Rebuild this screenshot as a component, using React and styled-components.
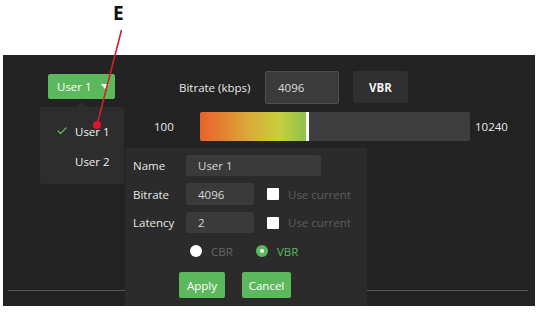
import React from "react";
import styled, { createGlobalStyle } from "styled-components";
import { Check } from "lucide-react";

const GREEN = "#5cb85c";

const GlobalStyle = createGlobalStyle`
  html, body {
    margin: 0;
    padding: 0;
    background: #ffffff;
  }
  body {
    font-family: "Open Sans", "Noto Sans", sans-serif;
  }
`;

const Stage = styled.div`
  position: relative;
  width: 540px;
  height: 312px;
  overflow: hidden;
  background: #fff;
`;

const Callout = styled.div`
  position: absolute;
  left: 113px;
  top: 0;
  line-height: 26px;
  font-family: "Open Sans", "Liberation Sans", sans-serif;
  font-weight: 700;
  font-size: 19px;
  color: #111;
`;

const Pointer = styled.svg`
  position: absolute;
  left: 0;
  top: 0;
  width: 540px;
  height: 312px;
  pointer-events: none;
  z-index: 5;
`;

const Panel = styled.div`
  position: relative;
  margin: 55px 0 0 3px;
  width: 532px;
  height: 251px;
  background: #232323;
  display: flex;
  flex-direction: column;
  color: #e8e8e8;
  font-size: 11.5px;
`;

const TopRow = styled.div`
  display: flex;
  align-items: center;
  height: 34px;
  margin-top: 15px;
  padding-left: 45px;
`;

const ProfileButton = styled.button`
  display: flex;
  align-items: center;
  gap: 9px;
  width: 67px;
  height: 25px;
  padding: 0 0 0 9px;
  border: none;
  border-radius: 2px;
  background: ${GREEN};
  color: #fff;
  font: inherit;
  margin-top: -2px;
`;

const Caret = styled.span`
  width: 0;
  height: 0;
  border-left: 4px solid transparent;
  border-right: 4px solid transparent;
  border-top: 5px solid #fff;
`;

const FieldLabel = styled.span`
  margin-left: 64px;
  width: 86px;
`;

const BitrateInput = styled.div`
  box-sizing: border-box;
  width: 74px;
  height: 33px;
  display: flex;
  align-items: center;
  padding-left: 12px;
  background: #3b3b3b;
  border: 1px solid #4d4d4d;
  border-radius: 2px;
  color: #ddd;
`;

const ModeButton = styled.div`
  margin-left: 14px;
  width: 55px;
  height: 32px;
  display: flex;
  align-items: center;
  justify-content: center;
  background: #2f2f2f;
  border-radius: 3px;
  font-weight: 700;
  color: #f2f2f2;
`;

const SliderRow = styled.div`
  display: flex;
  align-items: center;
  margin-top: 8px;
  padding-left: 151px;
  height: 29px;
`;

const RangeValue = styled.span`
  width: ${(p) => p.$w}px;
  margin-left: ${(p) => p.$ml || 0}px;
`;

const Track = styled.div`
  width: 270px;
  height: 29px;
  background: #3e3e3e;
  border-radius: 2px;
  overflow: hidden;
  display: flex;
`;

const Fill = styled.div`
  height: 100%;
  background: linear-gradient(90deg, #e8612b 0%, #dba83a 45%, #c8cf3c 75%, #8cc34b 100%);
  border-right: 3px solid #ffffff;
`;

const Divider = styled.div`
  margin: auto 7px 15px 5px;
  height: 1px;
  background: #575757;
`;

const Menu = styled.div`
  position: absolute;
  left: 37px;
  top: 52px;
  width: 84px;
  height: 77px;
  background: #2d2d2d;
  border-radius: 2px;
  padding-top: 9px;
  box-sizing: border-box;
  z-index: 2;
  &::before {
    content: "";
    position: absolute;
    left: 36px;
    top: -5px;
    border-left: 5px solid transparent;
    border-right: 5px solid transparent;
    border-bottom: 5px solid #2d2d2d;
  }
`;

const MenuItem = styled.div`
  display: flex;
  align-items: center;
  height: 30px;
  padding-left: 16px;
  gap: 6px;
  color: #f0f0f0;
`;

const CheckSlot = styled.span`
  width: 13px;
  display: flex;
  color: ${GREEN};
`;

const Popup = styled.div`
  position: absolute;
  left: 122px;
  top: 93px;
  bottom: 0;
  width: 242px;
  background: #2b2b2b;
  box-sizing: border-box;
  padding: 7px 0 0 8px;
  display: flex;
  flex-direction: column;
  z-index: 3;
`;

const FormRow = styled.div`
  display: flex;
  align-items: center;
  height: ${(p) => p.$h || 22}px;
  margin-bottom: 7px;
`;

const RowLabel = styled.span`
  width: 53px;
  color: #e8e8e8;
`;

const TextField = styled.div`
  box-sizing: border-box;
  width: ${(p) => p.$w}px;
  height: 100%;
  background: #3a3a3a;
  border-radius: 2px;
  padding-left: 12px;
  display: flex;
  align-items: center;
  color: #d8d8d8;
`;

const CheckBox = styled.span`
  width: 12px;
  height: 12px;
  background: #fff;
  border-radius: 1px;
  margin-left: 13px;
`;

const Muted = styled.span`
  margin-left: 9px;
  color: #5e5e5e;
`;

const RadioRow = styled.div`
  display: flex;
  align-items: center;
  margin: 5px 0 0 57px;
  height: 12px;
`;

const Radio = styled.span`
  box-sizing: border-box;
  width: 12px;
  height: 12px;
  border-radius: 50%;
  background: ${(p) => (p.$on ? GREEN : "#fff")};
  display: flex;
  align-items: center;
  justify-content: center;
  &::after {
    content: "";
    width: 4px;
    height: 4px;
    border-radius: 50%;
    background: ${(p) => (p.$on ? "#fff" : "transparent")};
  }
`;

const RadioText = styled.span`
  margin-left: 9px;
  width: ${(p) => p.$w || "auto"};
  color: ${(p) => (p.$on ? GREEN : "#666")};
`;

const Actions = styled.div`
  display: flex;
  gap: 17px;
  margin: 15px 0 0 46px;
`;

const ActionButton = styled.button`
  width: ${(p) => p.$w}px;
  height: 26px;
  padding: 0;
  border: none;
  border-radius: 2px;
  background: ${GREEN};
  color: #fff;
  font: inherit;
`;

export default function App() {
  const fillPct = ((4096 - 100) / (10240 - 100)) * 100;
  return (
    <>
      <GlobalStyle />
      <Stage>
        <Callout>E</Callout>
        <Pointer viewBox="0 0 540 312">
          <line x1="121.5" y1="30" x2="97" y2="125" stroke="#d0202b" strokeWidth="1.6" />
          <circle cx="97" cy="125" r="4" fill="#e0152b" />
        </Pointer>
        <Panel>
          <TopRow>
            <ProfileButton>
              User 1 <Caret />
            </ProfileButton>
            <FieldLabel>Bitrate (kbps)</FieldLabel>
            <BitrateInput>4096</BitrateInput>
            <ModeButton>VBR</ModeButton>
          </TopRow>
          <SliderRow>
            <RangeValue $w={46}>100</RangeValue>
            <Track>
              <Fill style={{ width: `${fillPct}%` }} />
            </Track>
            <RangeValue $ml={5}>10240</RangeValue>
          </SliderRow>
          <Divider />

          <Menu>
            <MenuItem>
              <CheckSlot>
                <Check size={12} strokeWidth={2.5} />
              </CheckSlot>
              User 1
            </MenuItem>
            <MenuItem>
              <CheckSlot />
              User 2
            </MenuItem>
          </Menu>

          <Popup>
            <FormRow $h={21}>
              <RowLabel>Name</RowLabel>
              <TextField $w={135}>User 1</TextField>
            </FormRow>
            <FormRow>
              <RowLabel>Bitrate</RowLabel>
              <TextField $w={68}>4096</TextField>
              <CheckBox />
              <Muted>Use current</Muted>
            </FormRow>
            <FormRow $h={21}>
              <RowLabel>Latency</RowLabel>
              <TextField $w={68}>2</TextField>
              <CheckBox />
              <Muted>Use current</Muted>
            </FormRow>
            <RadioRow>
              <Radio />
              <RadioText $w="45px">CBR</RadioText>
              <Radio $on />
              <RadioText $on>VBR</RadioText>
            </RadioRow>
            <Actions>
              <ActionButton $w={46}>Apply</ActionButton>
              <ActionButton $w={49}>Cancel</ActionButton>
            </Actions>
          </Popup>
        </Panel>
      </Stage>
    </>
  );
}
